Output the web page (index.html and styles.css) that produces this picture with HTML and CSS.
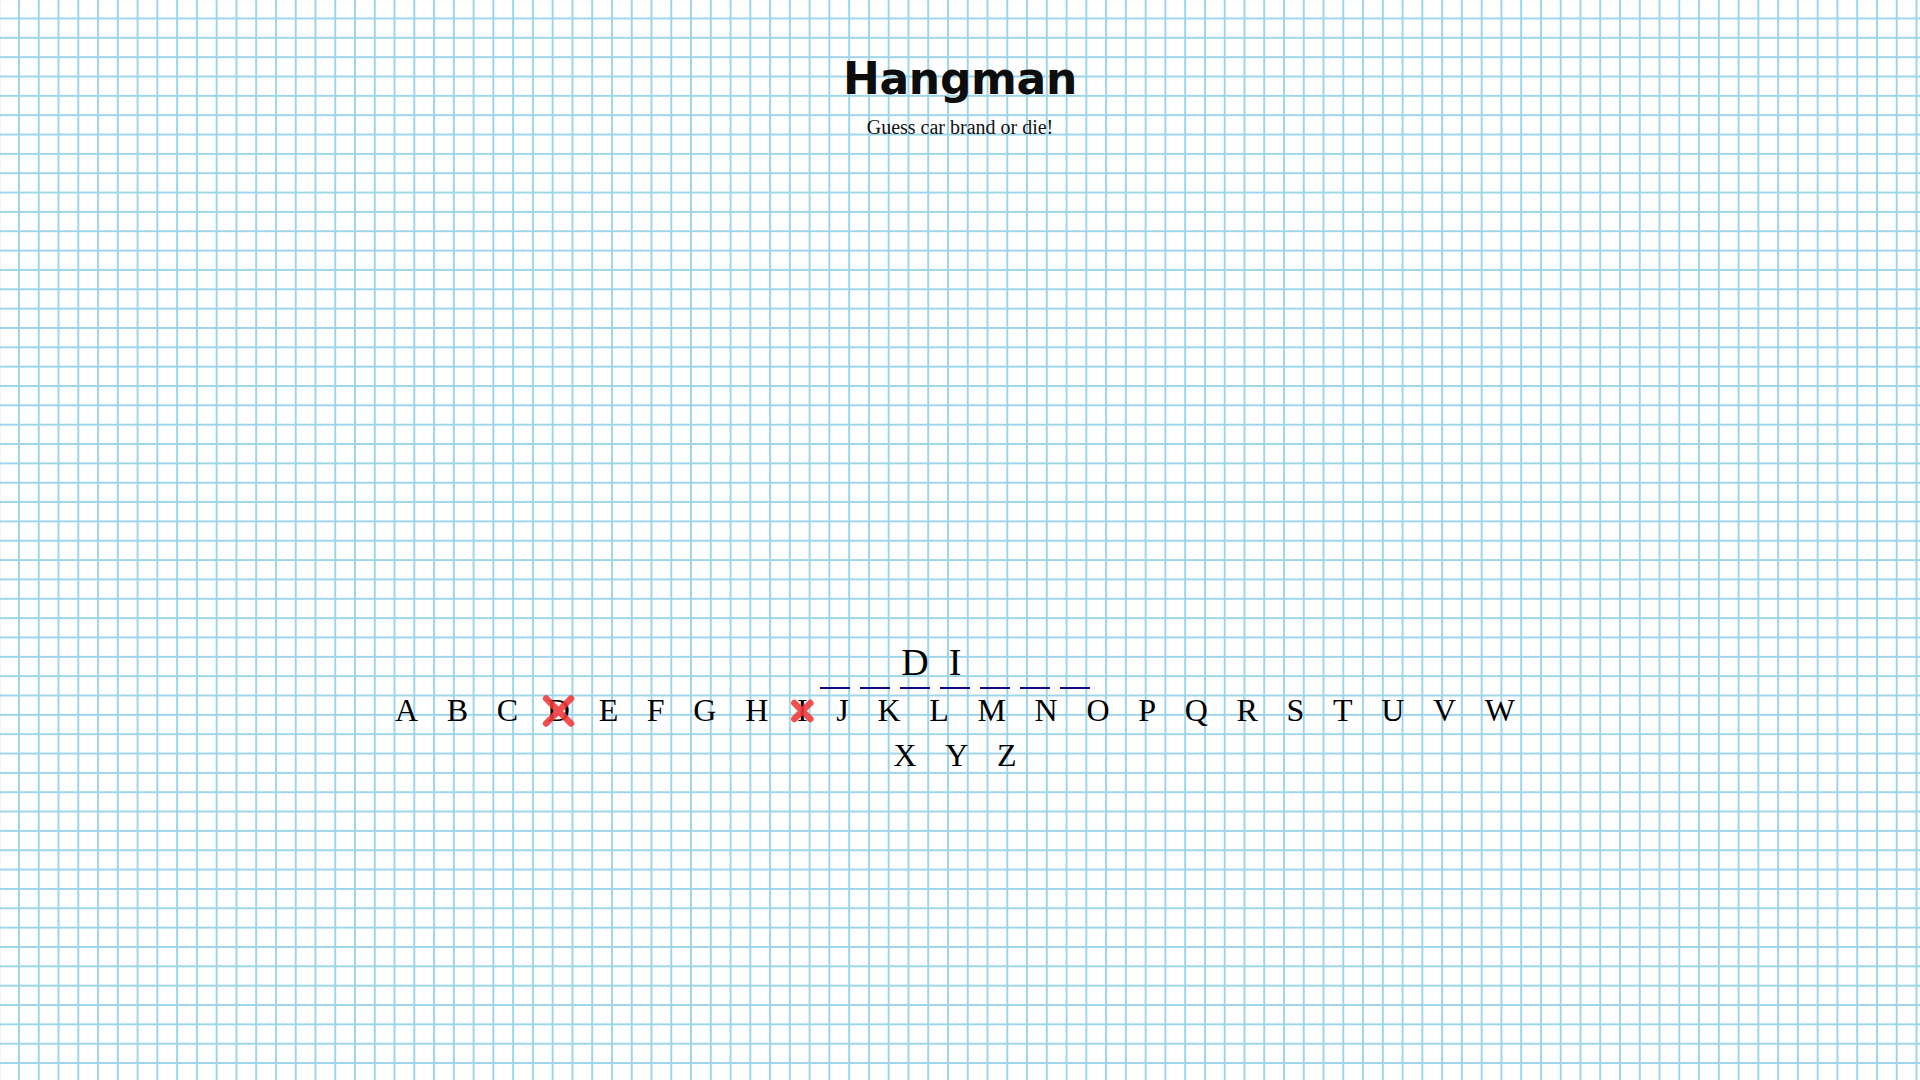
FILE: index.html
```html
<!DOCTYPE html>
<html lang="en">
<head>
<meta charset="utf-8">
<title>Hangman</title>
<link rel="stylesheet" href="styles.css">
</head>
<body>
<main class="page">
  <header class="header">
    <h1 class="title">Hangman</h1>
    <p class="subtitle">Guess car brand or die!</p>
  </header>
  <div class="stage"></div>
  <section class="game">
    <div class="word">
      <span class="slot"></span>
      <span class="slot"></span>
      <span class="slot">D</span>
      <span class="slot">I</span>
      <span class="slot"></span>
      <span class="slot"></span>
      <span class="slot"></span>
    </div>
    <div class="letters">
      <span class="letter">A</span>
      <span class="letter">B</span>
      <span class="letter">C</span>
      <span class="letter wrong">D<svg class="cross" viewBox="0 0 24 24"><path d="M3.5 3.5 L20.5 20.5 M20.5 3.5 L3.5 20.5"/></svg></span>
      <span class="letter">E</span>
      <span class="letter">F</span>
      <span class="letter">G</span>
      <span class="letter">H</span>
      <span class="letter wrong">I<svg class="cross" viewBox="0 0 24 24"><path d="M3.5 3.5 L20.5 20.5 M20.5 3.5 L3.5 20.5"/></svg></span>
      <span class="letter">J</span>
      <span class="letter">K</span>
      <span class="letter">L</span>
      <span class="letter">M</span>
      <span class="letter">N</span>
      <span class="letter">O</span>
      <span class="letter">P</span>
      <span class="letter">Q</span>
      <span class="letter">R</span>
      <span class="letter">S</span>
      <span class="letter">T</span>
      <span class="letter">U</span>
      <span class="letter">V</span>
      <span class="letter">W</span>
      <span class="letter">X</span>
      <span class="letter">Y</span>
      <span class="letter">Z</span>
    </div>
  </section>
</main>
</body>
</html>
```
FILE: styles.css
```css
html {
  background-color: #ffffff;
  background-image:
    linear-gradient(to right, #9dd5ea 2px, transparent 2px),
    linear-gradient(to bottom, #9dd5ea 2px, transparent 2px);
  background-size: 19.77px 19.35px;
  background-position: 18px 17.5px;
  min-height: 100%;
}

body {
  margin: 0;
  min-height: 100vh;
  font-family: "Liberation Serif", "Times New Roman", serif;
  color: #000;
}

.page {
  display: flex;
  flex-direction: column;
  align-items: center;
}

.header {
  display: flex;
  flex-direction: column;
  align-items: center;
}

.title {
  margin: 53px 0 0;
  font-family: "DejaVu Sans", sans-serif;
  font-weight: 700;
  font-size: 44px;
  line-height: 52px;
  color: #0d0d0d;
  letter-spacing: -0.3px;
}

.subtitle {
  margin: 11px 0 0;
  font-size: 20px;
  line-height: 23px;
  color: #111;
}

.stage {
  height: 498px;
}

.game {
  width: 1160px;
  box-sizing: border-box;
  padding-right: 10px;
  display: flex;
  flex-direction: column;
  align-items: center;
}

.word {
  display: flex;
  gap: 10px;
  justify-content: center;
}

.slot {
  width: 30px;
  height: 50px;
  font-size: 38px;
  line-height: 50px;
  text-align: center;
  border-bottom: 2px solid #0b0b85;
  color: #000;
}

.letters {
  width: 100%;
  display: flex;
  flex-wrap: wrap;
  justify-content: center;
  column-gap: 28.7px;
  row-gap: 2px;
}

.letter {
  position: relative;
  font-size: 32px;
  line-height: 43px;
  color: #000;
}

.cross {
  position: absolute;
  left: -6px;
  width: calc(100% + 12px);
  aspect-ratio: 1 / 1;
  top: 50%;
  transform: translateY(-50%);
  overflow: visible;
}

.cross path {
  fill: none;
  stroke: rgba(240, 56, 56, 0.88);
  stroke-width: 6.5px;
  stroke-linecap: round;
  vector-effect: non-scaling-stroke;
}
```
